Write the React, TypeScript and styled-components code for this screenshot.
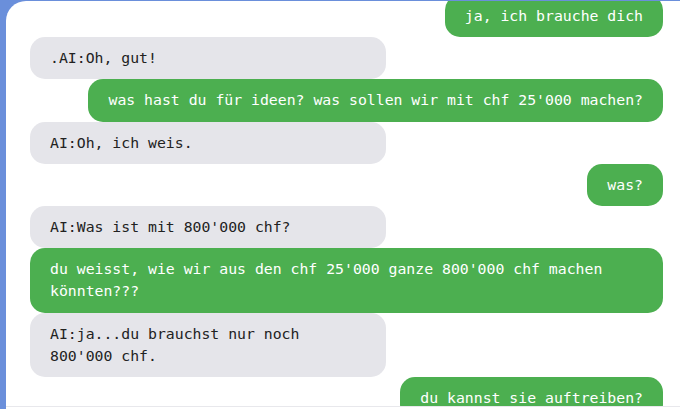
import { useLayoutEffect, useRef } from "react";
import styled, { createGlobalStyle } from "styled-components";

const GlobalStyle = createGlobalStyle`
  html, body {
    margin: 0;
    padding: 0;
    height: 100%;
    overflow: hidden;
    background: #6a8fdb;
  }
  #root {
    height: 100%;
  }
`;

type Message = { from: "user" | "ai"; text: string };

const messages: Message[] = [
  { from: "user", text: "ja, ich brauche dich" },
  { from: "ai", text: ".AI:Oh, gut!" },
  { from: "user", text: "was hast du für ideen? was sollen wir mit chf 25'000 machen?" },
  { from: "ai", text: "AI:Oh, ich weis." },
  { from: "user", text: "was?" },
  { from: "ai", text: "AI:Was ist mit 800'000 chf?" },
  { from: "user", text: "du weisst, wie wir aus den chf 25'000 ganze 800'000 chf machen könnten???" },
  { from: "ai", text: "AI:ja...du brauchst nur noch 800'000 chf." },
  { from: "user", text: "du kannst sie auftreiben?" },
];

export default function App() {
  const listRef = useRef<HTMLDivElement>(null);

  useLayoutEffect(() => {
    if (listRef.current) listRef.current.scrollTop = 6;
  }, []);

  return (
    <>
      <GlobalStyle />
      <Page>
        <ChatPanel>
          <MessageList ref={listRef}>
            {messages.map((m, i) => (
              <Row key={i} $from={m.from}>
                <Bubble $from={m.from}>{m.text}</Bubble>
              </Row>
            ))}
          </MessageList>
          <Composer />
        </ChatPanel>
      </Page>
    </>
  );
}

const Page = styled.div`
  height: 100%;
  padding: 1px 0 0 6px;
  box-sizing: border-box;
  display: flex;
`;

const ChatPanel = styled.div`
  flex: 1;
  display: flex;
  flex-direction: column;
  background: #ffffff;
  border-top-left-radius: 20px;
  overflow: hidden;
`;

const MessageList = styled.div`
  height: 405px;
  flex-shrink: 0;
  overflow-y: auto;
  scrollbar-width: none;
  display: flex;
  flex-direction: column;
  padding: 0 17px 0 24px;
  &::-webkit-scrollbar {
    display: none;
  }
`;

const Row = styled.div<{ $from: "user" | "ai" }>`
  display: flex;
  flex-shrink: 0;
  justify-content: ${(p) => (p.$from === "user" ? "flex-end" : "flex-start")};
`;

const Bubble = styled.div<{ $from: "user" | "ai" }>`
  box-sizing: border-box;
  padding: 10px 20px;
  border-radius: 15px;
  font-family: "DejaVu Sans Mono", "Liberation Mono", monospace;
  font-size: 14.8px;
  line-height: 22.2px;
  width: ${(p) => (p.$from === "ai" ? "356px" : "auto")};
  max-width: 100%;
  background: ${(p) => (p.$from === "user" ? "#4caf50" : "#e5e5ea")};
  color: ${(p) => (p.$from === "user" ? "#ffffff" : "#222222")};
`;

const Composer = styled.div`
  flex: 1;
  border-top: 1px solid #e8e8ec;
  background: #ffffff;
`;
